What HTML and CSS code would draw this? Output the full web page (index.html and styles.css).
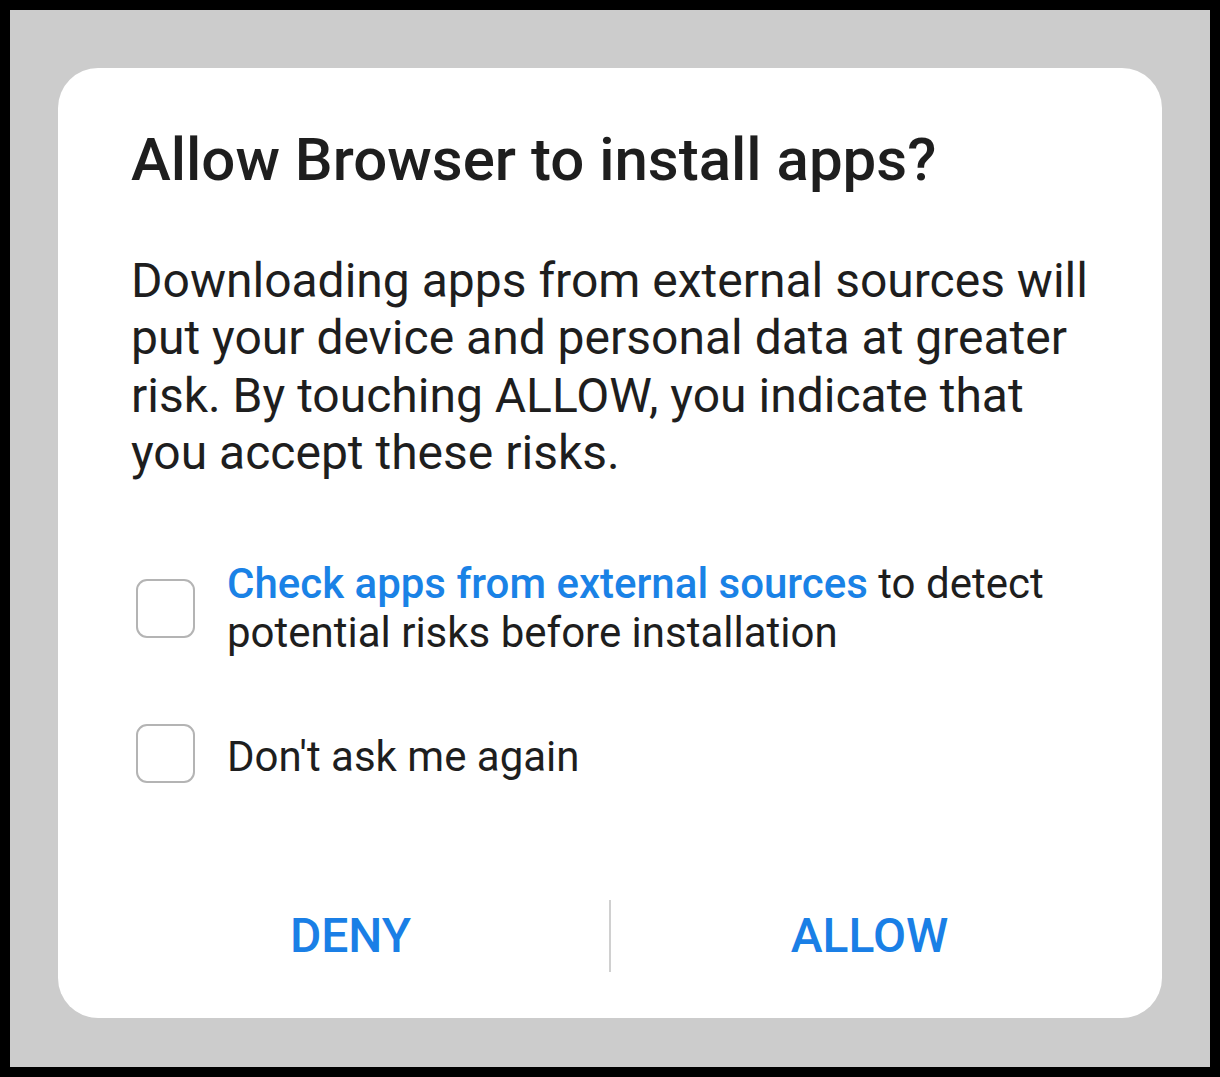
FILE: index.html
```html
<!DOCTYPE html>
<html lang="en">
<head>
    <meta charset="UTF-8">
    <title>Allow Browser to install apps?</title>
    <link rel="stylesheet" href="styles.css">
</head>
<body>
    <div class="screen">
        <div class="dialog">
            <h1 class="title">Allow Browser to install apps?</h1>
            <p class="message">Downloading apps from external sources will put your device and personal data at greater risk. By touching ALLOW, you indicate that you accept these risks.</p>

            <div class="options">
                <label class="option">
                    <span class="box"></span>
                    <span class="option-text"><span class="link">Check apps from external sources</span> to detect potential risks before installation</span>
                </label>
                <label class="option">
                    <span class="box"></span>
                    <span class="option-text single">Don't ask me again</span>
                </label>
            </div>

            <div class="actions">
                <button class="action">DENY</button>
                <span class="divider"></span>
                <button class="action">ALLOW</button>
            </div>
        </div>
    </div>
</body>
</html>
```

FILE: styles.css
```css
/* Dialog screenshot */
html, body {
    margin: 0;
    padding: 0;
}

body {
    background-color: #000;
    padding: 10px;
    font-family: Roboto, "Noto Sans", sans-serif;
    color: #1e1e1e;
}

.screen {
    background-color: #cccccc;
    height: 1057px;
    padding: 58px 48px 0;
    box-sizing: border-box;
}

.dialog {
    background-color: #fff;
    border-radius: 40px;
    height: 950px;
    box-sizing: border-box;
    padding: 56px 58px 0 73px;
    display: flex;
    flex-direction: column;
}

.title {
    margin: 0;
    font-size: 60px;
    font-weight: 500;
    line-height: 72px;
}

.message {
    margin: 56px 0 0;
    font-size: 48px;
    line-height: 57.3px;
}

.options {
    margin-top: 78px;
    display: flex;
    flex-direction: column;
    gap: 67px;
}

.option {
    display: flex;
    align-items: center;
    gap: 32px;
}

.box {
    flex: none;
    width: 59px;
    height: 59px;
    margin-left: 5px;
    box-sizing: border-box;
    border: 2.5px solid #b4b4b4;
    border-radius: 11px;
}

.option-text {
    font-size: 42px;
    line-height: 49px;
}

.option-text.single {
    padding-top: 5px;
}

.link {
    color: #1a82e6;
    font-weight: 500;
}

.actions {
    margin: auto -24px 46px -39px;
    display: flex;
    align-items: center;
}

.action {
    flex: 1;
    background: none;
    border: none;
    padding: 0;
    font-family: inherit;
    font-size: 48px;
    font-weight: 500;
    color: #1a7fe6;
    line-height: 72px;
    cursor: pointer;
}

.divider {
    width: 2px;
    height: 72px;
    background-color: #d0d0d0;
}
```
